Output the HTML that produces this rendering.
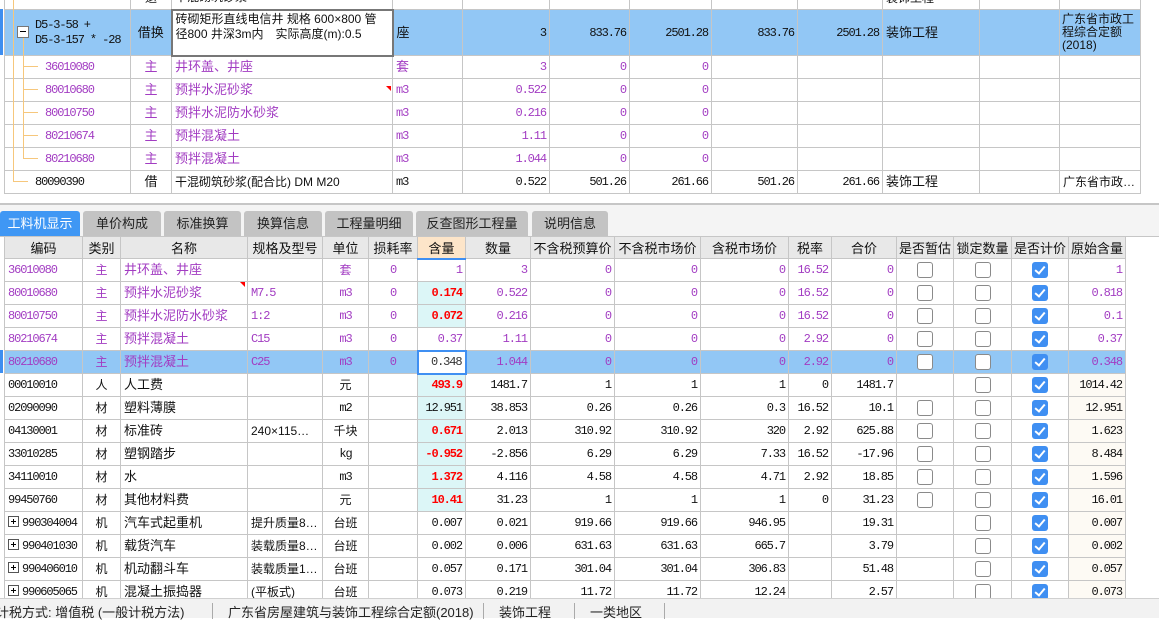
<!DOCTYPE html>
<html><head><meta charset="utf-8"><style>
*{margin:0;padding:0;box-sizing:border-box}
body{width:1159px;height:618px;overflow:hidden;background:#fff;font-family:"Liberation Mono","Noto Sans CJK SC",monospace;font-size:12px;color:#111;position:relative}
table{border-collapse:collapse;table-layout:fixed;position:absolute}
td{border:1px solid #c6c6c6;white-space:nowrap;overflow:hidden;padding:0 3px;font-size:12px;line-height:14px;letter-spacing:-1.1px}
.r{text-align:right}.c{text-align:center}
.p{color:#a23cc2}
.sel td{background:#92c7f5}
.red{color:#f00;font-weight:bold}
.cy{background:#dcf6f7}
.og{background:#fdfaf4}
.cjk{font-family:"Liberation Sans","Noto Sans CJK SC",sans-serif;letter-spacing:0}
.cb{display:inline-block;width:16px;height:16px;border:1px solid #8a8a8a;border-radius:3px;background:#fff;vertical-align:middle}
.ck{display:inline-block;width:16px;height:16px;border-radius:3px;background:#3f8ff2;vertical-align:middle;position:relative}
.ck:after{content:"";position:absolute;left:5px;top:2px;width:4px;height:8px;border:solid #fff;border-width:0 2px 2px 0;transform:rotate(40deg)}
th{font-weight:normal;background:#e8e8e8;border:1px solid #c6c6c6;font-size:13px;font-family:"Liberation Sans","Noto Sans CJK SC",sans-serif;white-space:nowrap;overflow:hidden}
.tab{position:absolute;top:211px;height:26px;background:#c3c3c3;border-radius:3px 3px 0 0;font-family:"Liberation Sans","Noto Sans CJK SC",sans-serif;font-size:13px;text-align:center;line-height:26px;color:#222}
.pb{display:inline-block;width:11px;height:11px;border:1px solid #555;position:relative;vertical-align:-1px;margin-right:3px}
.pb:before{content:"";position:absolute;left:2px;top:4px;width:5px;height:1px;background:#000}
.pb:after{content:"";position:absolute;left:4px;top:2px;width:1px;height:5px;background:#000}
</style></head><body>

<table style="left:4px;top:-15px;width:1137px">
<colgroup><col style="width:126px"><col style="width:41px"><col style="width:221px"><col style="width:70px"><col style="width:87px"><col style="width:80px"><col style="width:82px"><col style="width:86px"><col style="width:85px"><col style="width:97px"><col style="width:80px"><col style="width:81px"></colgroup>
<tr style="height:24px"><td></td><td class="c cjk">退</td><td class="cjk">干混砌筑砂浆</td><td></td><td></td><td></td><td></td><td></td><td></td><td class="cjk">装饰工程</td><td></td><td></td></tr>
<tr class="sel" style="height:46px"><td style="padding-left:30px;line-height:15px">D5-3-58 +<br>D5-3-157 * -28</td><td class="c cjk" style="font-size:13px">借换</td><td class="cjk" style="background:#fff;border:2px solid #777;vertical-align:top;white-space:normal;line-height:15px;padding-top:1px">砖砌矩形直线电信井 规格 600×800 管径800 井深3m内　实际高度(m):0.5</td><td class="cjk" style="font-size:13px">座</td><td class="r">3</td><td class="r">833.76</td><td class="r">2501.28</td><td class="r">833.76</td><td class="r">2501.28</td><td class="cjk" style="font-size:13px">装饰工程</td><td></td><td class="cjk" style="white-space:normal;line-height:13px;padding:0 2px">广东省市政工程综合定额(2018)</td></tr>
<tr style="height:23px"><td class="p" style="padding-left:40px">36010080</td><td class="c p cjk" style="font-size:13px">主</td><td class="p cjk" style="font-size:13px">井环盖、井座</td><td class="p cjk" style="font-size:13px">套</td><td class="r p">3</td><td class="r p">0</td><td class="r p">0</td><td></td><td></td><td></td><td></td><td></td></tr>
<tr style="height:23px"><td class="p" style="padding-left:40px">80010680</td><td class="c p cjk" style="font-size:13px">主</td><td class="p cjk" style="font-size:13px">预拌水泥砂浆</td><td class="p">m3</td><td class="r p">0.522</td><td class="r p">0</td><td class="r p">0</td><td></td><td></td><td></td><td></td><td></td></tr>
<tr style="height:23px"><td class="p" style="padding-left:40px">80010750</td><td class="c p cjk" style="font-size:13px">主</td><td class="p cjk" style="font-size:13px">预拌水泥防水砂浆</td><td class="p">m3</td><td class="r p">0.216</td><td class="r p">0</td><td class="r p">0</td><td></td><td></td><td></td><td></td><td></td></tr>
<tr style="height:23px"><td class="p" style="padding-left:40px">80210674</td><td class="c p cjk" style="font-size:13px">主</td><td class="p cjk" style="font-size:13px">预拌混凝土</td><td class="p">m3</td><td class="r p">1.11</td><td class="r p">0</td><td class="r p">0</td><td></td><td></td><td></td><td></td><td></td></tr>
<tr style="height:23px"><td class="p" style="padding-left:40px">80210680</td><td class="c p cjk" style="font-size:13px">主</td><td class="p cjk" style="font-size:13px">预拌混凝土</td><td class="p">m3</td><td class="r p">1.044</td><td class="r p">0</td><td class="r p">0</td><td></td><td></td><td></td><td></td><td></td></tr>
<tr style="height:23px"><td style="padding-left:30px">80090390</td><td class="c cjk" style="font-size:13px">借</td><td class="cjk">干混砌筑砂浆(配合比) DM M20</td><td>m3</td><td class="r">0.522</td><td class="r">501.26</td><td class="r">261.66</td><td class="r">501.26</td><td class="r">261.66</td><td class="cjk" style="font-size:13px">装饰工程</td><td></td><td class="cjk">广东省市政…</td></tr>
</table>
<div style="position:absolute;left:0;top:9px;width:3px;height:46px;background:#3d8ef0"></div>
<div style="position:absolute;left:13px;top:0;width:1px;height:181px;background:#f6c77c"></div>
<div style="position:absolute;left:13px;top:181px;width:15px;height:1px;background:#f6c77c"></div>
<div style="position:absolute;left:23px;top:38px;width:1px;height:120px;background:#f6c77c"></div>
<div style="position:absolute;left:23px;top:66px;width:15px;height:1px;background:#f6c77c"></div>
<div style="position:absolute;left:23px;top:89px;width:15px;height:1px;background:#f6c77c"></div>
<div style="position:absolute;left:23px;top:112px;width:15px;height:1px;background:#f6c77c"></div>
<div style="position:absolute;left:23px;top:135px;width:15px;height:1px;background:#f6c77c"></div>
<div style="position:absolute;left:23px;top:158px;width:15px;height:1px;background:#f6c77c"></div>
<div style="position:absolute;left:17px;top:26px;width:12px;height:12px;border:1px solid #777;background:#fff"><div style="position:absolute;left:2px;top:4px;width:6px;height:1px;background:#000"></div></div>
<div style="position:absolute;left:386px;top:86px;width:0;height:0;border-top:5px solid #f00;border-left:5px solid transparent"></div>

<div style="position:absolute;left:0;top:203px;width:1159px;height:34px;background:#f4f4f4;border-top:2px solid #c6c6c6"></div>
<div class="tab" style="left:0;width:80px;background:#3f97f4;color:#fff">工料机显示</div>
<div class="tab" style="left:83px;width:78px">单价构成</div>
<div class="tab" style="left:164px;width:77px">标准换算</div>
<div class="tab" style="left:244px;width:78px">换算信息</div>
<div class="tab" style="left:325px;width:88px">工程量明细</div>
<div class="tab" style="left:416px;width:112px">反查图形工程量</div>
<div class="tab" style="left:532px;width:76px">说明信息</div>
<div style="position:absolute;left:0;top:236px;width:1159px;height:1px;background:#c6c6c6"></div>

<table style="left:4px;top:236px;width:1121px">
<colgroup><col style="width:78px"><col style="width:38px"><col style="width:127px"><col style="width:75px"><col style="width:46px"><col style="width:49px"><col style="width:48px"><col style="width:65px"><col style="width:84px"><col style="width:86px"><col style="width:88px"><col style="width:43px"><col style="width:65px"><col style="width:57px"><col style="width:58px"><col style="width:57px"><col style="width:57px"></colgroup>
<tr style="height:22px"><th>编码</th><th>类别</th><th>名称</th><th>规格及型号</th><th>单位</th><th>损耗率</th><th style="background:#fde5c9;border-bottom:2px solid #3f8ff2">含量</th><th>数量</th><th>不含税预算价</th><th>不含税市场价</th><th>含税市场价</th><th>税率</th><th>合价</th><th>是否暂估</th><th>锁定数量</th><th>是否计价</th><th>原始含量</th></tr>
<tr style="height:23px" class="p"><td>36010080</td><td class="c cjk">主</td><td class="cjk" style="font-size:13px">井环盖、井座</td><td></td><td class="c cjk">套</td><td class="c">0</td><td class="r">1</td><td class="r">3</td><td class="r">0</td><td class="r">0</td><td class="r">0</td><td class="r">16.52</td><td class="r">0</td><td class="c"><span class="cb"></span></td><td class="c"><span class="cb"></span></td><td class="c"><span class="ck"></span></td><td class="r">1</td></tr>
<tr style="height:23px" class="p"><td>80010680</td><td class="c cjk">主</td><td class="cjk" style="font-size:13px">预拌水泥砂浆</td><td>M7.5</td><td class="c">m3</td><td class="c">0</td><td class="r cy red">0.174</td><td class="r">0.522</td><td class="r">0</td><td class="r">0</td><td class="r">0</td><td class="r">16.52</td><td class="r">0</td><td class="c"><span class="cb"></span></td><td class="c"><span class="cb"></span></td><td class="c"><span class="ck"></span></td><td class="r">0.818</td></tr>
<tr style="height:23px" class="p"><td>80010750</td><td class="c cjk">主</td><td class="cjk" style="font-size:13px">预拌水泥防水砂浆</td><td>1:2</td><td class="c">m3</td><td class="c">0</td><td class="r cy red">0.072</td><td class="r">0.216</td><td class="r">0</td><td class="r">0</td><td class="r">0</td><td class="r">16.52</td><td class="r">0</td><td class="c"><span class="cb"></span></td><td class="c"><span class="cb"></span></td><td class="c"><span class="ck"></span></td><td class="r">0.1</td></tr>
<tr style="height:23px" class="p"><td>80210674</td><td class="c cjk">主</td><td class="cjk" style="font-size:13px">预拌混凝土</td><td>C15</td><td class="c">m3</td><td class="c">0</td><td class="r">0.37</td><td class="r">1.11</td><td class="r">0</td><td class="r">0</td><td class="r">0</td><td class="r">2.92</td><td class="r">0</td><td class="c"><span class="cb"></span></td><td class="c"><span class="cb"></span></td><td class="c"><span class="ck"></span></td><td class="r">0.37</td></tr>
<tr style="height:23px" class="p sel"><td>80210680</td><td class="c cjk">主</td><td class="cjk" style="font-size:13px">预拌混凝土</td><td>C25</td><td class="c">m3</td><td class="c">0</td><td class="r" style="background:#fff;border:2px solid #3f8ff2;color:#333">0.348</td><td class="r">1.044</td><td class="r">0</td><td class="r">0</td><td class="r">0</td><td class="r">2.92</td><td class="r">0</td><td class="c"><span class="cb"></span></td><td class="c"><span class="cb"></span></td><td class="c"><span class="ck"></span></td><td class="r">0.348</td></tr>
<tr style="height:23px"><td>00010010</td><td class="c cjk">人</td><td class="cjk" style="font-size:13px">人工费</td><td></td><td class="c cjk">元</td><td></td><td class="r cy red">493.9</td><td class="r">1481.7</td><td class="r">1</td><td class="r">1</td><td class="r">1</td><td class="r">0</td><td class="r">1481.7</td><td></td><td class="c"><span class="cb"></span></td><td class="c"><span class="ck"></span></td><td class="r og">1014.42</td></tr>
<tr style="height:23px"><td>02090090</td><td class="c cjk">材</td><td class="cjk" style="font-size:13px">塑料薄膜</td><td></td><td class="c">m2</td><td></td><td class="r cy">12.951</td><td class="r">38.853</td><td class="r">0.26</td><td class="r">0.26</td><td class="r">0.3</td><td class="r">16.52</td><td class="r">10.1</td><td class="c"><span class="cb"></span></td><td class="c"><span class="cb"></span></td><td class="c"><span class="ck"></span></td><td class="r og">12.951</td></tr>
<tr style="height:23px"><td>04130001</td><td class="c cjk">材</td><td class="cjk" style="font-size:13px">标准砖</td><td class="cjk">240×115…</td><td class="c cjk">千块</td><td></td><td class="r cy red">0.671</td><td class="r">2.013</td><td class="r">310.92</td><td class="r">310.92</td><td class="r">320</td><td class="r">2.92</td><td class="r">625.88</td><td class="c"><span class="cb"></span></td><td class="c"><span class="cb"></span></td><td class="c"><span class="ck"></span></td><td class="r og">1.623</td></tr>
<tr style="height:23px"><td>33010285</td><td class="c cjk">材</td><td class="cjk" style="font-size:13px">塑钢踏步</td><td></td><td class="c">kg</td><td></td><td class="r cy red">-0.952</td><td class="r">-2.856</td><td class="r">6.29</td><td class="r">6.29</td><td class="r">7.33</td><td class="r">16.52</td><td class="r">-17.96</td><td class="c"><span class="cb"></span></td><td class="c"><span class="cb"></span></td><td class="c"><span class="ck"></span></td><td class="r og">8.484</td></tr>
<tr style="height:23px"><td>34110010</td><td class="c cjk">材</td><td class="cjk" style="font-size:13px">水</td><td></td><td class="c">m3</td><td></td><td class="r cy red">1.372</td><td class="r">4.116</td><td class="r">4.58</td><td class="r">4.58</td><td class="r">4.71</td><td class="r">2.92</td><td class="r">18.85</td><td class="c"><span class="cb"></span></td><td class="c"><span class="cb"></span></td><td class="c"><span class="ck"></span></td><td class="r og">1.596</td></tr>
<tr style="height:23px"><td>99450760</td><td class="c cjk">材</td><td class="cjk" style="font-size:13px">其他材料费</td><td></td><td class="c cjk">元</td><td></td><td class="r cy red">10.41</td><td class="r">31.23</td><td class="r">1</td><td class="r">1</td><td class="r">1</td><td class="r">0</td><td class="r">31.23</td><td class="c"><span class="cb"></span></td><td class="c"><span class="cb"></span></td><td class="c"><span class="ck"></span></td><td class="r og">16.01</td></tr>
<tr style="height:23px"><td style="padding-left:3px"><span class="pb"></span>990304004</td><td class="c cjk">机</td><td class="cjk" style="font-size:13px">汽车式起重机</td><td class="cjk">提升质量8…</td><td class="c cjk">台班</td><td></td><td class="r">0.007</td><td class="r">0.021</td><td class="r">919.66</td><td class="r">919.66</td><td class="r">946.95</td><td></td><td class="r">19.31</td><td></td><td class="c"><span class="cb"></span></td><td class="c"><span class="ck"></span></td><td class="r og">0.007</td></tr>
<tr style="height:23px"><td style="padding-left:3px"><span class="pb"></span>990401030</td><td class="c cjk">机</td><td class="cjk" style="font-size:13px">载货汽车</td><td class="cjk">装载质量8…</td><td class="c cjk">台班</td><td></td><td class="r">0.002</td><td class="r">0.006</td><td class="r">631.63</td><td class="r">631.63</td><td class="r">665.7</td><td></td><td class="r">3.79</td><td></td><td class="c"><span class="cb"></span></td><td class="c"><span class="ck"></span></td><td class="r og">0.002</td></tr>
<tr style="height:23px"><td style="padding-left:3px"><span class="pb"></span>990406010</td><td class="c cjk">机</td><td class="cjk" style="font-size:13px">机动翻斗车</td><td class="cjk">装载质量1…</td><td class="c cjk">台班</td><td></td><td class="r">0.057</td><td class="r">0.171</td><td class="r">301.04</td><td class="r">301.04</td><td class="r">306.83</td><td></td><td class="r">51.48</td><td></td><td class="c"><span class="cb"></span></td><td class="c"><span class="ck"></span></td><td class="r og">0.057</td></tr>
<tr style="height:23px"><td style="padding-left:3px"><span class="pb"></span>990605065</td><td class="c cjk">机</td><td class="cjk" style="font-size:13px">混凝土振捣器</td><td class="cjk">(平板式)</td><td class="c cjk">台班</td><td></td><td class="r">0.073</td><td class="r">0.219</td><td class="r">11.72</td><td class="r">11.72</td><td class="r">12.24</td><td></td><td class="r">2.57</td><td></td><td class="c"><span class="cb"></span></td><td class="c"><span class="ck"></span></td><td class="r og">0.073</td></tr>
</table>
<div style="position:absolute;left:0;top:350px;width:3px;height:23px;background:#3d8ef0"></div>
<div style="position:absolute;left:240px;top:282px;width:0;height:0;border-top:5px solid #f00;border-left:5px solid transparent"></div>

<div style="position:absolute;left:0;top:598px;width:1159px;height:20px;background:#f2f2f2;border-top:1px solid #d0d0d0;font-family:'Liberation Sans','Noto Sans CJK SC',sans-serif;font-size:13px;color:#222;line-height:28px;white-space:nowrap">
<span style="position:absolute;left:-4px">计税方式: 增值税 (一般计税方法)</span>
<span style="position:absolute;left:212px;top:4px;width:1px;height:16px;background:#aaa"></span>
<span style="position:absolute;left:228px">广东省房屋建筑与装饰工程综合定额(2018)</span>
<span style="position:absolute;left:483px;top:4px;width:1px;height:16px;background:#aaa"></span>
<span style="position:absolute;left:499px">装饰工程</span>
<span style="position:absolute;left:574px;top:4px;width:1px;height:16px;background:#aaa"></span>
<span style="position:absolute;left:590px">一类地区</span>
<span style="position:absolute;left:664px;top:4px;width:1px;height:16px;background:#aaa"></span>
</div>
</body></html>
